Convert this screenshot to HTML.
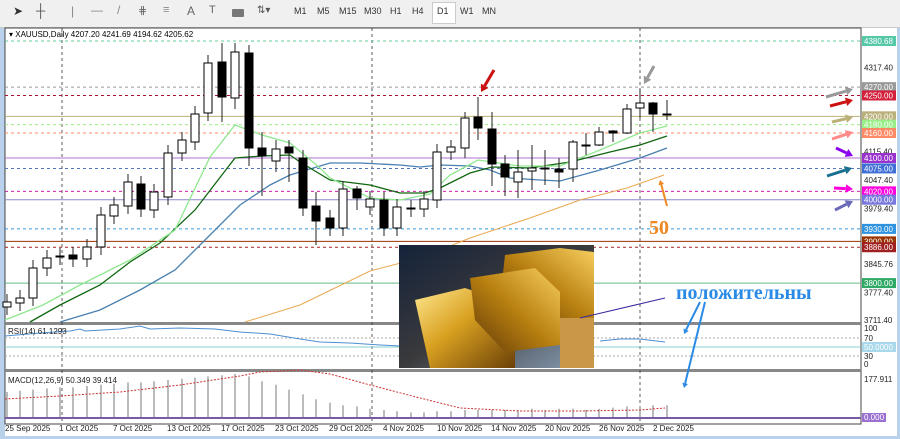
<!DOCTYPE html><html><head><meta charset="utf-8"><style>
body{margin:0;width:900px;height:439px;overflow:hidden;background:#b9d1ea;font-family:"Liberation Sans",sans-serif}
#tb{position:absolute;left:0;top:0;width:900px;height:27px;background:#f0f0f0;border-bottom:1px solid #c8c8c8}
.tb{position:absolute;top:6px;font-size:9px;color:#333}
svg{position:absolute;left:0;top:0}
</style></head><body>
<div id="tb">
<span class="tb" style="left:13px;font-size:12px;top:4px">➤</span>
<span class="tb" style="left:36px;font-size:13px;top:3px;color:#555">┼</span>
<span class="tb" style="left:71px;font-size:12px;top:4px;color:#888">|</span>
<span class="tb" style="left:91px;font-size:12px;top:3px;color:#888">—</span>
<span class="tb" style="left:117px;font-size:12px;top:3px;color:#888">/</span>
<span class="tb" style="left:138px;font-size:11px;top:4px;color:#666">⋕</span>
<span class="tb" style="left:163px;font-size:11px;top:4px;color:#888">≡</span>
<span class="tb" style="left:187px;font-size:12px;top:4px;color:#666">A</span>
<span class="tb" style="left:209px;font-size:11px;top:4px;color:#666">T</span>
<span class="tb" style="left:232px;top:9px;width:12px;height:8px;background:#777;border-radius:1px"></span>
<span class="tb" style="left:257px;font-size:10px;top:5px;color:#555">⇅▾</span>
<span class="tb" style="left:294px">M1</span><span class="tb" style="left:317px">M5</span><span class="tb" style="left:339px">M15</span><span class="tb" style="left:364px">M30</span><span class="tb" style="left:390px">H1</span><span class="tb" style="left:412px">H4</span>
<span class="tb" style="left:432px;top:2px;width:22px;height:20px;background:#fff;border:1px solid #ccc"></span>
<span class="tb" style="left:437px">D1</span><span class="tb" style="left:460px">W1</span><span class="tb" style="left:482px">MN</span>
</div>
<svg id="s" width="900" height="439" xmlns="http://www.w3.org/2000/svg" font-family="Liberation Sans, sans-serif"></svg>
<script>
var S=document.getElementById('s'),h='';
function Y(p){return 41+(4380.68-p)*0.4169}
h+='<rect x="5" y="28" width="892" height="408" fill="#fff"/><rect x="5" y="28" width="856" height="396" fill="#fff" stroke="#444"/>';
h+='<rect x="5" y="322" width="856" height="3" fill="#888"/><rect x="5" y="369" width="856" height="3" fill="#888"/>';
[62,372,640].forEach(function(x){h+='<line x1="'+x+'" y1="28" x2="'+x+'" y2="424" stroke="#333" stroke-dasharray="3,3" stroke-width="0.8"/>'});
var L=[[4380.68,'#66cc99',1],[4270,'#999',1],[4250,'#aa1133',1],[4200,'#bbb077',0],[4180,'#99ee88',1],[4160,'#ff8866',1],[4100,'#b070d0',0],[4075,'#5577bb',1],[4020,'#cc22aa',1],[4000,'#8888cc',0],[3930,'#3399dd',1],[3900,'#993300',0],[3886,'#aa2222',1],[3800,'#66bb88',0]];
L.forEach(function(l){var y=Y(l[0]);h+='<line x1="5" y1="'+y+'" x2="861" y2="'+y+'" stroke="'+l[1]+'" '+(l[2]?'stroke-dasharray="3,3"':'')+' stroke-width="1"/>';});
function P(pts,col,w){h+='<polyline points="'+pts+'" fill="none" stroke="'+col+'" stroke-width="'+(w||1.3)+'"/>'}
P('245,322 300,305 370,271 420,258 470,238 530,218 580,200 627,188 664,175','#e8a850',1);
P('60,322 100,310 140,290 175,270 200,245 240,205 270,185 290,175 330,163 360,163 400,165 420,167 440,165 470,166 490,170 510,178 540,180 560,181 600,170 640,158 667,148','#4a80b0');
P('30,322 60,305 100,285 130,262 160,243 195,210 235,158 262,156 290,155 300,162 330,180 370,185 400,193 425,193 440,188 470,173 492,167 530,168 570,162 610,152 640,145 667,136','#116611');
P('5,320 43,305 80,285 130,260 175,230 210,157 235,125 262,135 290,143 320,168 330,178 370,198 400,200 430,194 450,175 478,160 492,162 520,166 560,166 600,150 640,133 667,126','#90e890');
var K=[[7,302,307,1],[20,298,303,1],[33,268,298,1],[47,258,268,1],[60,256,257,1],[73,255,259,0],[87,247,259,1],[101,215,247,1],[114,205,216,1],[128,182,206,1],[141,184,209,0],[154,192,210,1],[168,153,197,1],[182,140,153,1],[195,114,142,1],[208,63,113,1],[222,62,97,0,43,122],[235,52,98,1,43,109],[249,53,148,0,45,166],[262,148,156,0,132,196],[276,149,161,1,140,172],[289,147,153,0,140,182],[303,158,208,0],[316,206,221,0,192,245],[330,218,228,0],[343,189,228,1],[357,189,198,0,186,210],[370,199,207,1],[384,200,228,0],[397,207,228,1],[411,208,209,1],[424,199,209,1],[437,152,200,1],[451,147,152,1,140,160],[465,118,148,1,112,158],[478,117,128,0,97,140],[492,129,164,0,112,186],[505,164,177,0,155,196],[518,172,182,1,150,198],[532,168,171,1,145,190],[545,168,169,1,150,185],[559,169,172,0,158,188],[573,142,169,1,140,182],[586,145,146,1,133,155],[599,132,145,1,127,146],[613,131,133,0,130,142],[627,109,133,1,104,134],[640,103,108,1,89,118],[653,103,114,0,102,132],[667,114,115,1,100,120]];
K.forEach(function(k){var hi=k[4]||k[1]-8,lo=k[5]||k[2]+8;h+='<line x1="'+k[0]+'" y1="'+hi+'" x2="'+k[0]+'" y2="'+lo+'" stroke="#222"/>';
h+='<rect x="'+(k[0]-4)+'" y="'+k[1]+'" width="8" height="'+Math.max(1,k[2]-k[1])+'" fill="'+(k[3]?'#fff':'#000')+'" stroke="#000"/>'});
// RSI
h+='<line x1="5" y1="338" x2="861" y2="338" stroke="#aaa" stroke-dasharray="2,2"/><line x1="5" y1="356" x2="861" y2="356" stroke="#aaa" stroke-dasharray="2,2"/><line x1="5" y1="347" x2="861" y2="347" stroke="#8cc"/>';
h+='<path d="M5,336 L40,333 L70,331 L80,329 L85,331 L120,329 L140,326 L150,329 L180,328 L215,329 L240,332 L270,334 L300,339 L320,342 L350,343 L380,345 L400,346 M600,341 L620,339 L640,339 L665,342" fill="none" stroke="#4d8fd1"/>';
// MACD
var V=[44,45,46,47,48,48,49,50,51,52,52,53,54,55,56,57,58,59,57,53,50,46,42,38,35,33,32,30,29,28,27,27,28,28,29,29,29,29,29,30,29,30,30,29,30,31,32,32,33];
K.forEach(function(k,i){var v=V[Math.min(i,48)];h+='<line x1="'+k[0]+'" y1="418" x2="'+k[0]+'" y2="'+(418-(v-24)*1.2-2)+'" stroke="#777"/>'});
h+='<path d="M5,399 L60,396 L120,392 L180,385 L240,376 L260,372 L300,370 L330,374 L370,385 L420,398 L460,408 L520,411 L580,411 L640,410 L665,408" fill="none" stroke="#cc3333" stroke-dasharray="2,1.5"/>';
h+='<line x1="5" y1="418" x2="861" y2="418" stroke="#7a5aa0" stroke-width="2"/>';
// image
h+='<defs><linearGradient id="g" x1="0" y1="0" x2="1" y2="1"><stop offset="0" stop-color="#14223a"/><stop offset="0.5" stop-color="#3a3a3c"/><stop offset="1" stop-color="#8aa0b8"/></linearGradient><linearGradient id="au" x1="0" y1="0" x2="1" y2="1"><stop offset="0" stop-color="#ffe890"/><stop offset="0.45" stop-color="#d8a020"/><stop offset="1" stop-color="#6a4008"/></linearGradient><linearGradient id="au2" x1="1" y1="0" x2="0" y2="1"><stop offset="0" stop-color="#f8d060"/><stop offset="0.5" stop-color="#b88010"/><stop offset="1" stop-color="#603808"/></linearGradient></defs>';
h+='<rect x="399" y="245" width="195" height="123" fill="url(#g)"/>';
h+='<polygon points="505,255 560,248 594,252 594,318 545,322 500,300" fill="url(#au2)"/><polygon points="415,300 465,288 515,305 515,368 430,368" fill="url(#au)"/><polygon points="470,278 535,268 560,292 560,345 505,352 475,320" fill="url(#au2)"/><rect x="560" y="318" width="34" height="50" fill="#c89848"/>';
h+='<line x1="580" y1="318" x2="665" y2="298" stroke="#3a2aa0"/>';
// right axis
var A=[[4380.68,'#55c8a8'],[4317.40,0],[4270,'#999'],[4250,'#d41f3a'],[4200,'#bab07a'],[4180,'#99ee88'],[4160,'#ff8a66'],[4115.40,0],[4100,'#9932cc'],[4075,'#3f6fd6'],[4047.40,0],[4020,'#ff00dd'],[4000,'#7777dd'],[3979.40,0],[3930,'#2f93e0'],[3900,'#993300'],[3886,'#a02020'],[3845.76,0],[3800,'#2faa66'],[3777.40,0],[3711.40,0]];
A.forEach(function(a){var y=Y(a[0]);if(a[1])h+='<rect x="862" y="'+(y-5)+'" width="34" height="10" fill="'+a[1]+'"/>';h+='<text x="864" y="'+(y+3)+'" font-size="8" fill="'+(a[1]?'#fff':'#222')+'">'+a[0].toFixed(2)+'</text>'});
[[100,328],[70,338],[30,356],[0,364]].forEach(function(r){h+='<text x="864" y="'+(r[1]+3)+'" font-size="8" fill="#222">'+r[0]+'</text>'});
h+='<rect x="862" y="342" width="34" height="10" fill="#a8d8ea"/><text x="864" y="350" font-size="8" fill="#fff">50.0000</text>';
h+='<text x="864" y="382" font-size="8" fill="#222">177.911</text><rect x="862" y="413" width="24" height="9" fill="#9a70d0"/><text x="864" y="420" font-size="8" fill="#fff">0.000</text>';
['25 Sep 2025','1 Oct 2025','7 Oct 2025','13 Oct 2025','17 Oct 2025','23 Oct 2025','29 Oct 2025','4 Nov 2025','10 Nov 2025','14 Nov 2025','20 Nov 2025','26 Nov 2025','2 Dec 2025'].forEach(function(d,i){h+='<text x="'+(5+i*54)+'" y="431" font-size="8" fill="#222">'+d+'</text>'});
h+='<text x="9" y="37" font-size="8" fill="#000">▾ XAUUSD,Daily  4207.20 4241.69 4194.62 4205.62</text>';
h+='<text x="8" y="334" font-size="8" fill="#222">RSI(14) 61.1293</text><text x="8" y="383" font-size="8" fill="#222">MACD(12,26,9) 50.349 39.414</text>';
h+='<text x="676" y="299" font-size="20" font-weight="bold" font-family="Liberation Serif,serif" fill="#2a8ae6">положительны</text>';
h+='<text x="649" y="234" font-size="20" font-weight="bold" font-family="Liberation Serif,serif" fill="#ee8822">50</text>';
function arr(x1,y1,x2,y2,c,w){var dx=x2-x1,dy=y2-y1,l=Math.hypot(dx,dy),ux=dx/l,uy=dy/l,s=w*2.4;var bx=x2-ux*s,by=y2-uy*s;h+='<line x1="'+x1+'" y1="'+y1+'" x2="'+bx+'" y2="'+by+'" stroke="'+c+'" stroke-width="'+w+'"/><polygon points="'+x2+','+y2+' '+(bx-uy*s*0.6)+','+(by+ux*s*0.6)+' '+(bx+uy*s*0.6)+','+(by-ux*s*0.6)+'" fill="'+c+'"/>'}
arr(667,206,660,180,'#ee8822',2);
arr(700,302,684,334,'#2a8ae6',2);arr(705,302,684,388,'#2a8ae6',2);
arr(494,70,481,92,'#cc1111',3);arr(654,66,644,84,'#999',3);
arr(826,97,853,89,'#999',3);arr(830,106,853,100,'#cc1111',3);arr(832,122,853,117,'#bbb077',3);arr(832,139,853,132,'#ff8888',3);arr(836,148,853,156,'#8800ee',3);arr(827,176,852,168,'#1a7090',3);arr(834,188,853,189,'#ff00dd',3);arr(835,210,853,201,'#6a6ab8',3);
S.innerHTML=h;
</script></body></html>
